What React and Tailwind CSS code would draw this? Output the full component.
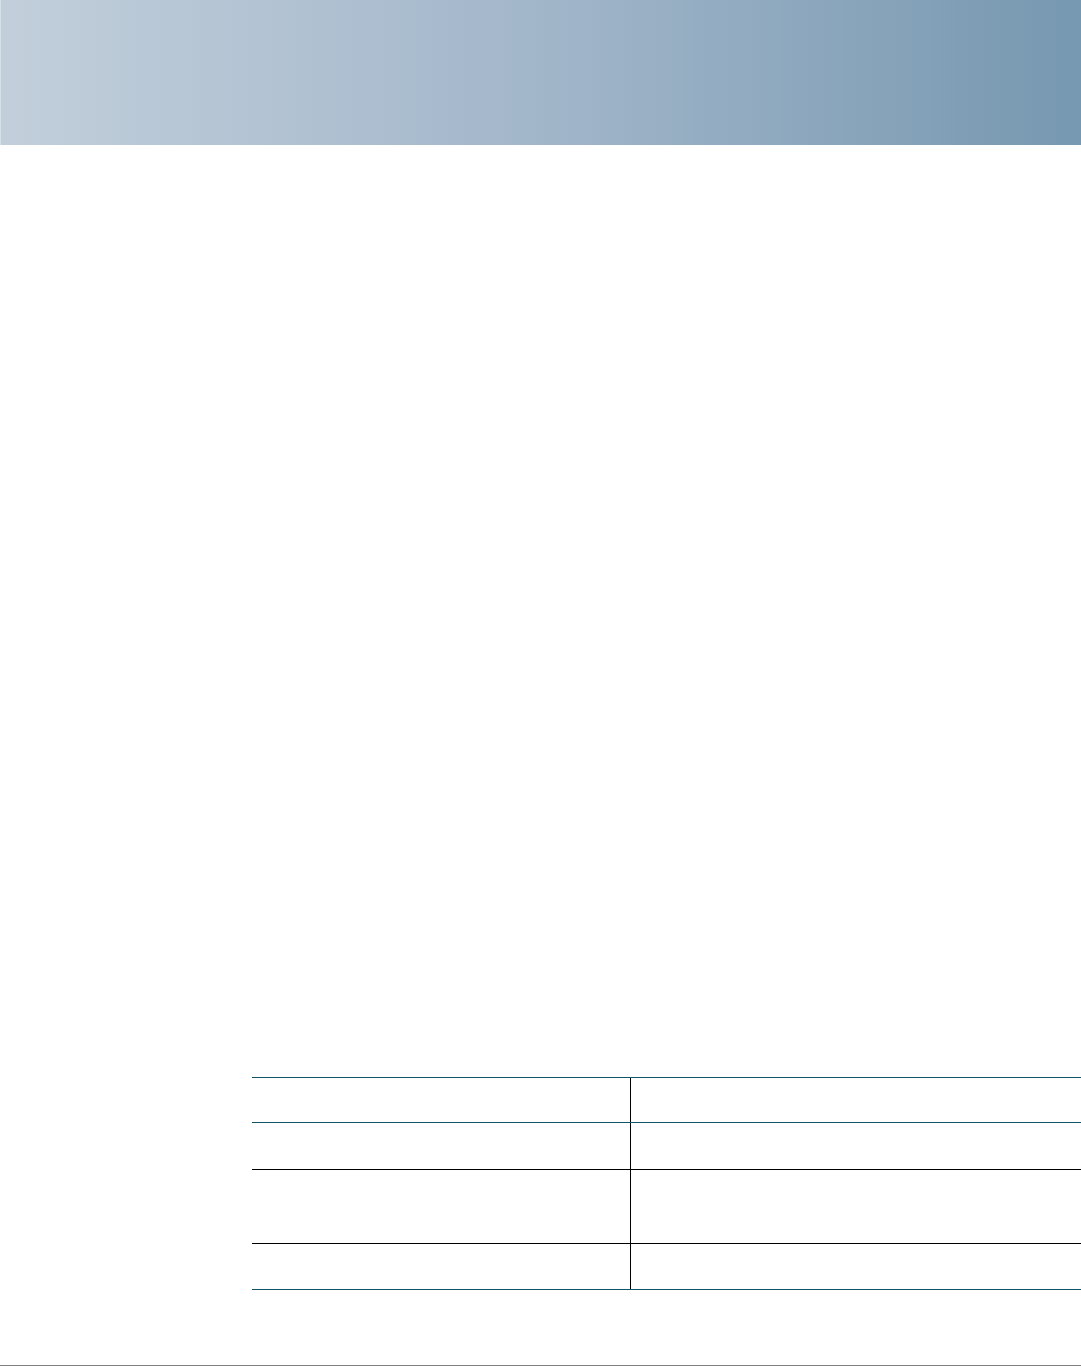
export default function App() {
  const rows = [
    { h: "h-[45px]", c: "border-[#0f5468]" },
    { h: "h-[47px]", c: "border-[#0f5468]" },
    { h: "h-[74px]", c: "border-black" },
    { h: "h-[46px]", c: "border-black" },
  ];
  return (
    <div className="w-[1081px] h-[1366px] bg-white flex flex-col font-['Liberation_Sans',sans-serif]">
      <div className="h-[145px] w-full bg-gradient-to-r from-[#c2cfdb] via-[#a2b6ca] to-[#7698b0] border-l border-[#d6e0e8]" />
      <div className="mt-[932px] ml-[252px] flex flex-col">
        {rows.map((r, i) => (
          <div key={i} className={`flex border-t ${r.c} ${r.h}`}>
            <div className="w-[379px] border-r border-black" />
            <div className="flex-1" />
          </div>
        ))}
        <div className="border-t border-[#0f5468]" />
      </div>
      <div className="mt-auto border-b border-[#808080]" />
    </div>
  );
}
